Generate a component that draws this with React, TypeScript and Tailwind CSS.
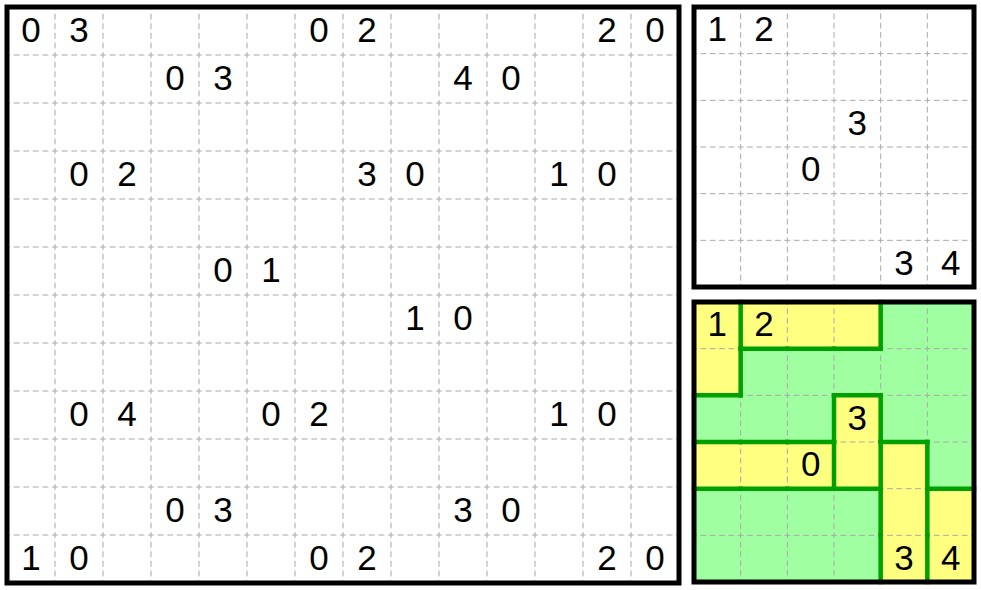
import React from "react"

const LEFT = [
  "03....02....20",
  "...03....40...",
  "..............",
  ".02....30..10.",
  "..............",
  "....01........",
  "........10....",
  "..............",
  ".04..02....10.",
  "..............",
  "...03....30...",
  "10....02....20",
]

const SMALL = [
  "12....",
  "......",
  "...3..",
  "..0...",
  "......",
  "....34",
]

// region ids for the solved board; lowercase = green, uppercase = yellow
const REGIONS = [
  "ABBBgg",
  "Aggggg",
  "gggCgg",
  "DDDCEg",
  "hhhhEF",
  "hhhhEF",
]

const isYellow = (ch: string) => ch >= "A" && ch <= "Z"

type BoardProps = {
  cols: number
  rows: number
  width: number
  height: number
  digits: string[]
  regions?: string[]
  className: string
  gridClass: string
}

function Board({ cols, rows, width, height, digits, regions, className, gridClass }: BoardProps) {
  const cw = width / cols
  const ch = height / rows
  const period = cw / 5
  const dash = period * 0.62

  const dashed: React.ReactNode[] = []
  for (let c = 1; c < cols; c++) {
    dashed.push(
      <line key={"v" + c} x1={c * cw} y1={0} x2={c * cw} y2={height} />
    )
  }
  for (let r = 1; r < rows; r++) {
    dashed.push(
      <line key={"h" + r} x1={0} y1={r * ch} x2={width} y2={r * ch} />
    )
  }

  const walls: React.ReactNode[] = []
  if (regions) {
    for (let r = 0; r < rows; r++) {
      for (let c = 0; c < cols; c++) {
        const id = regions[r][c]
        if (c < cols - 1 && regions[r][c + 1] !== id) {
          walls.push(
            <line key={`wv${r}-${c}`} x1={(c + 1) * cw} y1={r * ch} x2={(c + 1) * cw} y2={(r + 1) * ch} />
          )
        }
        if (r < rows - 1 && regions[r + 1][c] !== id) {
          walls.push(
            <line key={`wh${r}-${c}`} x1={c * cw} y1={(r + 1) * ch} x2={(c + 1) * cw} y2={(r + 1) * ch} />
          )
        }
      }
    }
  }

  return (
    <div className={`relative grid ${className} ${gridClass}`}>
      {digits.map((row, r) =>
        row.split("").map((d, c) => {
          const bg = regions ? (isYellow(regions[r][c]) ? "bg-[#ffff80]" : "bg-[#a0ffa0]") : "bg-white"
          return (
            <div key={`${r}-${c}`} className={`flex items-center justify-center pb-[3px] text-[35px] leading-none text-black ${bg}`}>
              {d === "." ? "" : d}
            </div>
          )
        })
      )}
      <svg
        className="pointer-events-none absolute inset-0 overflow-visible"
        width={width}
        height={height}
      >
        <g stroke="#a9a9a9" strokeWidth={1} strokeDasharray={`${dash} ${period - dash}`} strokeDashoffset={dash / 2}>
          {dashed}
        </g>
        <g stroke="#00a000" strokeWidth={4.5} strokeLinecap="square">
          {walls}
        </g>
        <rect x={0} y={0} width={width} height={height} fill="none" stroke="#000" strokeWidth={5} />
      </svg>
    </div>
  )
}

export default function App() {
  return (
    <div className="flex h-[590px] w-[981px] items-start gap-[15px] bg-white p-[7px] font-['Liberation_Sans',Arial,sans-serif]">
      <Board
        cols={14}
        rows={12}
        width={672}
        height={576}
        digits={LEFT}
        className="h-[576px] w-[672px] shrink-0"
        gridClass="grid-cols-[repeat(14,48px)] grid-rows-[repeat(12,48px)]"
      />
      <div className="flex flex-col gap-[15px]">
        <Board
          cols={6}
          rows={6}
          width={280}
          height={280}
          digits={SMALL}
          className="h-[280px] w-[280px]"
          gridClass="grid-cols-6 grid-rows-6"
        />
        <Board
          cols={6}
          rows={6}
          width={280}
          height={280}
          digits={SMALL}
          regions={REGIONS}
          className="h-[280px] w-[280px]"
          gridClass="grid-cols-6 grid-rows-6"
        />
      </div>
    </div>
  )
}
